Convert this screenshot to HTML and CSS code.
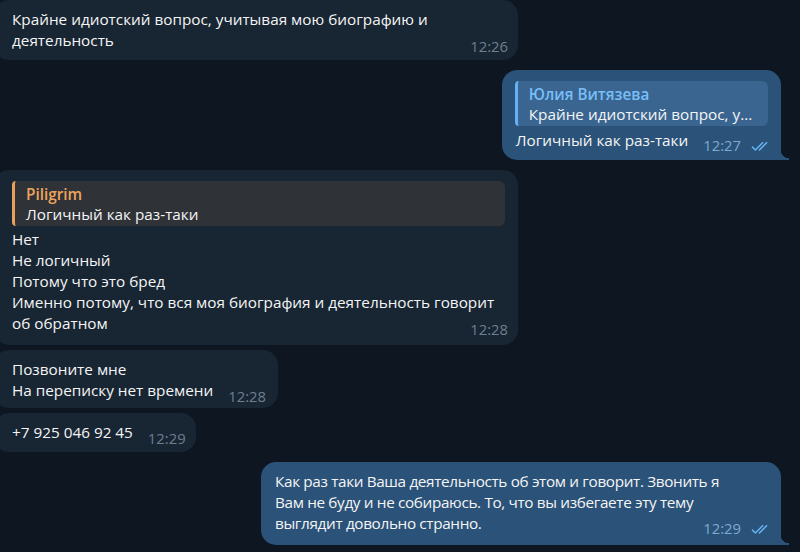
FILE: index.html
```html
<!DOCTYPE html>
<html>
  <head>
    <title>Чат</title>
    <link rel="stylesheet" href="styles.css">
  </head>
  <body>
    <div class="chat">
      <div class="msg in wide">
        <div class="line">Крайне идиотский вопрос, учитывая мою биографию и</div>
        <div class="last">
          <span>деятельность</span>
          <span class="meta">12:26</span>
        </div>
      </div>

      <div class="msg out gap-big">
        <div class="reply">
          <div class="reply-name">Юлия Витязева</div>
          <div class="reply-text">Крайне идиотский вопрос, у...</div>
        </div>
        <div class="last">
          <span>Логичный как раз-таки</span>
          <span class="meta">
            12:27
            <svg class="check" width="20" height="9" viewBox="0 0 20 9">
              <path d="M1.5 5.2 L4.4 8 L11.6 0.8" />
              <path d="M8.4 8 L15.6 0.8" />
            </svg>
          </span>
        </div>
      </div>

      <div class="msg in wide tall gap-big">
        <div class="reply reply-orange">
          <div class="reply-name">Piligrim</div>
          <div class="reply-text">Логичный как раз-таки</div>
        </div>
        <div class="line">Нет</div>
        <div class="line">Не логичный</div>
        <div class="line">Потому что это бред</div>
        <div class="line">Именно потому, что вся моя биография и деятельность говорит</div>
        <div class="last">
          <span>об обратном</span>
          <span class="meta">12:28</span>
        </div>
      </div>

      <div class="msg in short">
        <div class="line">Позвоните мне</div>
        <div class="last">
          <span>На переписку нет времени</span>
          <span class="meta">12:28</span>
        </div>
      </div>

      <div class="msg in">
        <div class="last">
          <span>+7 925 046 92 45</span>
          <span class="meta">12:29</span>
        </div>
      </div>

      <div class="msg out wide tall tight gap-big">
        <div class="line">Как раз таки Ваша деятельность об этом и говорит. Звонить я</div>
        <div class="line">Вам не буду и не собираюсь. То, что вы избегаете эту тему</div>
        <div class="last">
          <span>выглядит довольно странно.</span>
          <span class="meta">
            12:29
            <svg class="check" width="20" height="9" viewBox="0 0 20 9">
              <path d="M1.5 5.2 L4.4 8 L11.6 0.8" />
              <path d="M8.4 8 L15.6 0.8" />
            </svg>
          </span>
        </div>
      </div>
    </div>
  </body>
</html>
```

FILE: styles.css
```css
html,
body {
  margin: 0;
  height: 100%;
  background-color: #0e1621;
  overflow: hidden;
}

.chat {
  display: flex;
  flex-direction: column;
  gap: 5px;
  padding: 0 19px 0 0;
  font-family: "Open Sans", "Noto Sans", sans-serif;
  font-size: 15.3px;
  line-height: 21px;
  color: #f5f5f5;
}

.msg {
  box-sizing: border-box;
  padding: 9px 10px 9px 12px;
  border-radius: 15px;
}

.msg.tall {
  padding-bottom: 11px;
}

.msg.short {
  padding-bottom: 7px;
  padding-right: 12px;
}

.gap-big {
  margin-top: 5px;
}

.in {
  align-self: flex-start;
  background-color: #182533;
  margin-left: -6px;
  padding-left: 18px;
}

.out {
  align-self: flex-end;
  background-color: #2b5278;
  border-bottom-right-radius: 0;
  position: relative;
  padding-left: 14px;
}

/* small tail at the bottom right corner */
.out::after {
  content: "";
  position: absolute;
  right: -8px;
  bottom: 0;
  width: 8px;
  height: 10px;
  background: radial-gradient(circle at 100% 0, transparent 8px, #2b5278 8.5px);
}

.in.wide {
  width: 524px;
}

.out.wide {
  width: 520px;
}

.tight .line,
.tight .last > span:first-child {
  letter-spacing: -0.35px;
}

.last {
  display: flex;
  align-items: flex-end;
  justify-content: space-between;
}

.meta {
  display: inline-flex;
  align-items: baseline;
  margin-left: 15px;
  font-size: 14.8px;
  line-height: 10px;
  color: #6d7f8f;
  white-space: nowrap;
}

.out .meta {
  color: #7ea9d4;
}

.check {
  margin-left: 10px;
  fill: none;
  stroke: #64b2f2;
  stroke-width: 1.6;
  stroke-linecap: round;
  stroke-linejoin: round;
}

.reply {
  margin: 2px 3px 4px 0;
  padding: 3px 10px 2px 11px;
  border-left: 3px solid #64b2f2;
  border-radius: 4px 6px 6px 4px;
  background-color: #3a6590;
  line-height: 20px;
}

.out .reply {
  margin-left: -1px;
}

.reply-name {
  font-weight: 600;
  color: #78bff8;
}

.reply-text {
  white-space: nowrap;
}

.reply-orange {
  border-left-color: #e8a05b;
  background-color: #2f3237;
  margin-bottom: 3px;
}

.reply-orange .reply-name {
  color: #eea45c;
}
```
